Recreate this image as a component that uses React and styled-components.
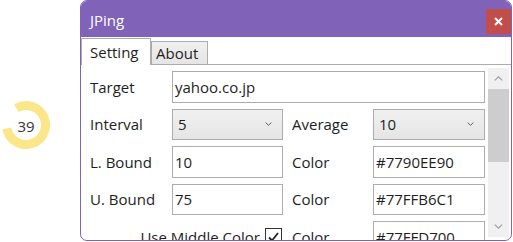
import React from "react";
import styled, { createGlobalStyle } from "styled-components";

const Global = createGlobalStyle`
  html, body { margin: 0; padding: 0; background: #fff; }
  body { font-family: "Open Sans", "Noto Sans", sans-serif; }
  * { box-sizing: border-box; }
`;

const Page = styled.div`
  display: flex;
  width: 513px;
  height: 242px;
  overflow: hidden;
  background: #fff;
`;

const GaugeColumn = styled.div`
  flex: none;
  width: 80px;
  padding: 100px 0 0 1px;
`;

const Ring = styled.div`
  position: relative;
  width: 50px;
  height: 50px;
`;

const RingValue = styled.span`
  position: absolute;
  inset: 0;
  display: flex;
  align-items: center;
  justify-content: center;
  font-size: 15px;
  color: #333;
  padding-top: 1px;
`;

const Window = styled.div`
  width: 432px;
  height: 241px;
  border: 1px solid #8062b8;
  border-radius: 7px;
  overflow: hidden;
  display: flex;
  flex-direction: column;
  background: #fff;
`;

const TitleBar = styled.div`
  flex: none;
  height: 36px;
  background: #8062b8;
  display: flex;
  justify-content: space-between;
  align-items: flex-start;
  padding-left: 9px;
`;

const Title = styled.span`
  color: #fff;
  font-size: 15px;
  line-height: 38px;
`;

const CloseButton = styled.div`
  margin-top: 8px;
  width: 25px;
  height: 25px;
  background: #c14e4b;
  display: flex;
  align-items: center;
  justify-content: center;
`;

const TabStrip = styled.div`
  flex: none;
  height: 27px;
  display: flex;
  align-items: flex-end;
  position: relative;
  z-index: 1;
`;

const Tab = styled.div`
  height: ${(p) => (p.$active ? "27px" : "23px")};
  width: ${(p) => p.$w}px;
  margin-bottom: ${(p) => (p.$active ? "-1px" : "0")};
  border: 1px solid #acacac;
  border-bottom: none;
  background: ${(p) =>
    p.$active ? "#fff" : "linear-gradient(#f0f0f0, #e5e5e5)"};
  display: flex;
  align-items: center;
  padding-left: ${(p) => (p.$active ? "8px" : "4px")};
  padding-bottom: ${(p) => (p.$active ? "1px" : "0")};
  font-size: 15px;
  color: #1e1e1e;
`;

const Panel = styled.div`
  flex: 1;
  min-height: 0;
  border-top: 1px solid #acacac;
  display: flex;
  padding-right: 2px;
`;

const Form = styled.div`
  flex: 1;
  min-width: 0;
  overflow: hidden;
  display: grid;
  grid-template-columns: 82px 111px 90px 112px;
  grid-auto-rows: 31.5px;
  row-gap: 6px;
  align-content: start;
  padding: 6px 0 0 9px;
  font-size: 15px;
  color: #1e1e1e;
`;

const Label = styled.div`
  display: flex;
  align-items: center;
  padding-left: ${(p) => (p.$indent ? "9px" : "0")};
`;

const TextBox = styled.div`
  grid-column: ${(p) => p.$span || "auto"};
  border: 1px solid #acacac;
  background: #fff;
  display: flex;
  align-items: center;
  padding: 0 2px;
`;

const Combo = styled.div`
  border: 1px solid #acacac;
  background: linear-gradient(#f0f0f0, #e5e5e5);
  display: flex;
  align-items: center;
  justify-content: space-between;
  padding: 0 10px 0 5px;
`;

const CheckRow = styled.div`
  grid-column: 1 / 3;
  display: flex;
  justify-content: flex-end;
  align-items: center;
  gap: 5px;
  padding-right: 1px;
`;

const CheckBox = styled.div`
  width: 17px;
  height: 17px;
  border: 1px solid #333;
  background: #fff;
  display: flex;
  align-items: center;
  justify-content: center;
`;

const ScrollBar = styled.div`
  flex: none;
  width: 21px;
  margin: 3px 0 3px 3px;
  background: #f0f0f0;
  display: flex;
  flex-direction: column;
`;

const ScrollButton = styled.div`
  flex: none;
  height: 21px;
  display: flex;
  align-items: center;
  justify-content: center;
`;

const Thumb = styled.div`
  flex: none;
  height: 73px;
  background: #cdcdcd;
`;

const Track = styled.div`
  flex: 1;
`;

const Chevron = ({ up, color = "#a0a0a0", w = 9, h = 5 }) => (
  <svg width={w} height={h} viewBox="0 0 9 5">
    <path
      d={up ? "M0.8 4.4 L4.5 0.8 L8.2 4.4" : "M0.8 0.6 L4.5 4.2 L8.2 0.6"}
      fill="none"
      stroke={color}
      strokeWidth="1.2"
    />
  </svg>
);

export default function App() {
  return (
    <Page>
      <Global />
      <GaugeColumn>
        <Ring>
          <svg width="50" height="50" viewBox="0 0 50 50">
            <path
              d="M15.25 8.11 A19.5 19.5 0 1 1 5.8 28.39"
              fill="none"
              stroke="#fce68a"
              strokeWidth="9"
            />
          </svg>
          <RingValue>39</RingValue>
        </Ring>
      </GaugeColumn>
      <Window>
        <TitleBar>
          <Title>JPing</Title>
          <CloseButton>
            <svg width="9" height="9" viewBox="0 0 9 9">
              <path d="M1 1 L8 8 M8 1 L1 8" stroke="#fff" strokeWidth="2" />
            </svg>
          </CloseButton>
        </TitleBar>
        <TabStrip>
          <Tab $active $w={70}>Setting</Tab>
          <Tab $w={57}>About</Tab>
        </TabStrip>
        <Panel>
          <Form>
            <Label>Target</Label>
            <TextBox $span="2 / 5">yahoo.co.jp</TextBox>

            <Label>Interval</Label>
            <Combo>
              <span>5</span>
              <Chevron color="#555" w={7} h={4} />
            </Combo>
            <Label $indent>Average</Label>
            <Combo>
              <span>10</span>
              <Chevron color="#555" w={7} h={4} />
            </Combo>

            <Label>L. Bound</Label>
            <TextBox>10</TextBox>
            <Label $indent>Color</Label>
            <TextBox>#7790EE90</TextBox>

            <Label>U. Bound</Label>
            <TextBox>75</TextBox>
            <Label $indent>Color</Label>
            <TextBox>#77FFB6C1</TextBox>

            <CheckRow>
              <span>Use Middle Color</span>
              <CheckBox>
                <svg width="11" height="10" viewBox="0 0 11 10">
                  <path
                    d="M1 5.5 L4 8.5 L10 1"
                    fill="none"
                    stroke="#222"
                    strokeWidth="1.8"
                  />
                </svg>
              </CheckBox>
            </CheckRow>
            <Label $indent>Color</Label>
            <TextBox>#77FFD700</TextBox>
          </Form>
          <ScrollBar>
            <ScrollButton>
              <Chevron up />
            </ScrollButton>
            <Thumb />
            <Track />
            <ScrollButton>
              <Chevron />
            </ScrollButton>
          </ScrollBar>
        </Panel>
      </Window>
    </Page>
  );
}
